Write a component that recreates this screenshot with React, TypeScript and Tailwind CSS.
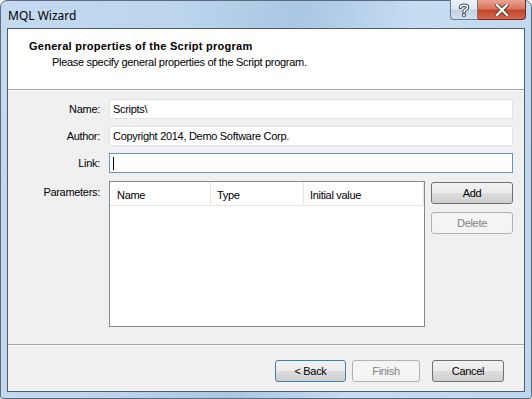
import React from "react";

const font = { fontFamily: '"Liberation Sans", Arial, sans-serif' };

function Btn({ label, kind = "normal", w }: { label: string; kind?: "normal" | "focus" | "disabled"; w: string }) {
  if (kind === "disabled") {
    return (
      <div className={`${w} h-[22px] rounded-[3px] border border-[#adb2b5] bg-[#f4f4f4] flex items-center justify-center text-[11px] tracking-[-0.3px] text-[#838383]`}>
        {label}
      </div>
    );
  }
  const border = kind === "focus" ? "border-[#3c7fb1]" : "border-[#707070]";
  return (
    <div className={`${w} h-[22px] rounded-[3px] border ${border} bg-[linear-gradient(#f2f2f2_0%,#ebebeb_50%,#dddddd_51%,#cfcfcf_100%)] flex items-center justify-center text-[11px] tracking-[-0.3px] text-black`}>
      {label}
    </div>
  );
}

function Input({ value, focus }: { value?: string; focus?: boolean }) {
  return (
    <div
      className={`w-[404px] h-[20px] border ${focus ? "border-[#5f97c9]" : "border-[#e2e3ea] border-t-[#abadb3]/40"} bg-white flex items-center px-[3px] text-[11px] tracking-[-0.3px] text-black`}
    >
      {focus ? <div className="w-px h-[13px] bg-black" /> : value}
    </div>
  );
}

export default function App() {
  return (
    <div className="w-[532px] h-[399px] bg-white" style={font}>
      <div className="w-[532px] h-[399px] rounded-t-[7px] rounded-b-[3px] border border-[#5b6b7d] bg-[linear-gradient(100deg,#c4daf0_0%,#bcd5ed_30%,#a9c6e3_50%,#c6ddf2_70%,#bcd6ee_100%)] flex flex-col px-[6px]">
        {/* title bar */}
        <div className="h-[27px] flex items-start">
          <div className="flex-1 pt-[6px] text-[12px] text-black" style={{ fontFamily: '"Noto Sans", "Open Sans", sans-serif' }}>
            <span className="pl-[1px]">MQL Wizard</span>
          </div>
          <div className="flex -mt-px mr-[-1px]">
            <div className="w-[28px] h-[20px] rounded-bl-[4px] border border-[#6d7c8d] border-t-0 bg-[linear-gradient(#eef3f9_0%,#dfe8f2_45%,#c5d3e2_55%,#d3dfec_100%)] flex items-center justify-center">
              <svg width="12" height="14" viewBox="0 0 12 14">
                <path d="M2.5 4.5 C2.5 1.5 9.5 1.5 9.5 4.5 C9.5 6.5 6 6.5 6 9" fill="none" stroke="#3b4a5c" strokeWidth="3.6" strokeLinecap="round" />
                <path d="M2.5 4.5 C2.5 1.5 9.5 1.5 9.5 4.5 C9.5 6.5 6 6.5 6 9" fill="none" stroke="#ffffff" strokeWidth="1.6" strokeLinecap="round" />
                <rect x="4.2" y="10.3" width="3.6" height="3.4" rx="0.6" fill="#3b4a5c" />
                <rect x="5.1" y="11.1" width="1.8" height="1.8" fill="#ffffff" />
              </svg>
            </div>
            <div className="w-[48px] h-[20px] rounded-br-[4px] border border-[#6d2b22] border-l-0 border-t-0 bg-[linear-gradient(#e8a493_0%,#d9765f_45%,#c4452c_55%,#d7664a_100%)] flex items-center justify-center">
              <svg width="14" height="12" viewBox="0 0 14 12">
                <path d="M2 1 L12 11 M12 1 L2 11" stroke="#4a2a24" strokeWidth="4" strokeLinecap="square" />
                <path d="M2 1 L12 11 M12 1 L2 11" stroke="#ffffff" strokeWidth="2.4" strokeLinecap="square" />
              </svg>
            </div>
          </div>
        </div>
        {/* client */}
        <div className="h-[364px] border border-[#4f5e6f] bg-[#f0f0f0] flex flex-col">
          <div className="h-[60px] bg-white pt-[10px] pl-[21px]">
            <div className="text-[11px] font-bold tracking-[0.27px] text-black leading-[14px]">General properties of the Script program</div>
            <div className="text-[11px] tracking-[-0.3px] text-black leading-[14px] pl-[23px] pt-[2px]">Please specify general properties of the Script program.</div>
          </div>
          <div className="h-px bg-[#a0a0a0]" />
          <div className="h-px bg-white" />
          <div className="flex flex-col pt-[8px] gap-[8px] text-[11px] tracking-[-0.3px]">
            <div className="flex items-center">
              <div className="w-[92px] text-right text-black">Name:</div>
              <div className="ml-[9px]"><Input value="Scripts\" /></div>
            </div>
            <div className="flex items-center -mt-px">
              <div className="w-[92px] text-right text-black">Author:</div>
              <div className="ml-[9px]"><Input value="Copyright 2014, Demo Software Corp." /></div>
            </div>
            <div className="flex items-center -mt-px">
              <div className="w-[92px] text-right text-black">Link:</div>
              <div className="ml-[9px]"><Input focus /></div>
            </div>
            <div className="flex items-start">
              <div className="w-[92px] text-right text-black pt-[3px]">Parameters:</div>
              <div className="ml-[9px] w-[316px] h-[146px] border border-[#828790] bg-white">
                <div className="flex h-[24px] border-b border-[#e5e5e5] text-black">
                  <div className="w-[101px] border-r border-[#e5e5e5] flex items-center pl-[7px] pt-[4px]">Name</div>
                  <div className="w-[93px] border-r border-[#e5e5e5] flex items-center pl-[6px] pt-[4px]">Type</div>
                  <div className="w-[120px] border-r border-[#e5e5e5] flex items-center pl-[6px] pt-[4px]">Initial value</div>
                </div>
              </div>
              <div className="ml-[6px] mt-px flex flex-col gap-[8px]">
                <Btn label="Add" w="w-[82px]" />
                <Btn label="Delete" kind="disabled" w="w-[82px]" />
              </div>
            </div>
          </div>
          <div className="mt-[17px] h-px bg-[#a0a0a0]" />
          <div className="h-px bg-white" />
          <div className="flex pt-[14px] pl-[267px]">
            <Btn label="< Back" kind="focus" w="w-[71px]" />
            <div className="ml-[6px]"><Btn label="Finish" kind="disabled" w="w-[68px]" /></div>
            <div className="ml-[12px]"><Btn label="Cancel" w="w-[72px]" /></div>
          </div>
        </div>
      </div>
    </div>
  );
}
